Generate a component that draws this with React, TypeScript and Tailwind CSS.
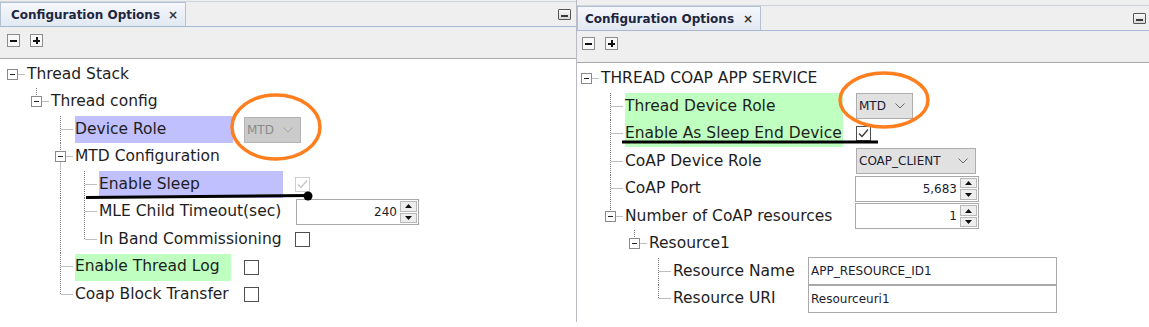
import type { ReactNode } from "react";

type Editor =
  | { type: "dropdown"; value: string; width: number; disabled?: boolean }
  | { type: "checkbox"; checked?: boolean; disabled?: boolean }
  | { type: "spinner"; value: string; width: number }
  | { type: "text"; value: string; width: number };

type Row = {
  level: number;
  label: string;
  branch?: boolean;
  last?: boolean;
  guides?: number[];
  hl?: "purple" | "green";
  hlWidth?: number;
  editorX?: number;
  editor?: Editor;
};

const leftRows: Row[] = [
  { level: 0, label: "Thread Stack", branch: true, last: true },
  { level: 1, label: "Thread config", branch: true, last: true },
  {
    level: 2,
    label: "Device Role",
    hl: "purple",
    hlWidth: 158,
    editorX: 244,
    editor: { type: "dropdown", value: "MTD", width: 57, disabled: true },
  },
  { level: 2, label: "MTD Configuration", branch: true },
  {
    level: 3,
    label: "Enable Sleep",
    guides: [2],
    hl: "purple",
    hlWidth: 184,
    editorX: 295,
    editor: { type: "checkbox", checked: true, disabled: true },
  },
  {
    level: 3,
    label: "MLE Child Timeout(sec)",
    guides: [2],
    editorX: 296,
    editor: { type: "spinner", value: "240", width: 123 },
  },
  {
    level: 3,
    label: "In Band Commissioning",
    guides: [2],
    last: true,
    editorX: 295,
    editor: { type: "checkbox" },
  },
  {
    level: 2,
    label: "Enable Thread Log",
    hl: "green",
    hlWidth: 156,
    editorX: 244,
    editor: { type: "checkbox" },
  },
  { level: 2, label: "Coap Block Transfer", last: true, editorX: 244, editor: { type: "checkbox" } },
];

const rightRows: Row[] = [
  { level: 0, label: "THREAD COAP APP SERVICE", branch: true, last: true },
  {
    level: 1,
    label: "Thread Device Role",
    hl: "green",
    hlWidth: 218,
    editorX: 279,
    editor: { type: "dropdown", value: "MTD", width: 57 },
  },
  {
    level: 1,
    label: "Enable As Sleep End Device",
    hl: "green",
    hlWidth: 218,
    editorX: 279,
    editor: { type: "checkbox", checked: true },
  },
  {
    level: 1,
    label: "CoAP Device Role",
    editorX: 279,
    editor: { type: "dropdown", value: "COAP_CLIENT", width: 120 },
  },
  { level: 1, label: "CoAP Port", editorX: 278, editor: { type: "spinner", value: "5,683", width: 124 } },
  {
    level: 1,
    label: "Number of CoAP resources",
    branch: true,
    last: true,
    editorX: 278,
    editor: { type: "spinner", value: "1", width: 124 },
  },
  { level: 2, label: "Resource1", branch: true, last: true },
  {
    level: 3,
    label: "Resource Name",
    editorX: 231,
    editor: { type: "text", value: "APP_RESOURCE_ID1", width: 249 },
  },
  {
    level: 3,
    label: "Resource URI",
    last: true,
    editorX: 231,
    editor: { type: "text", value: "Resourceuri1", width: 249 },
  },
];

const dot = { stroke: "#7c7c7c", strokeWidth: 1, strokeDasharray: "1 1" };

function Connectors({ row, base, col }: { row: Row; base: number; col: number }) {
  const w = base + 24 * row.level;
  const h = 27.5;
  const mid = 13.5;
  const x = (k: number) => Math.floor(col + 24 * k) + 0.5;
  const own = x(row.level);
  return (
    <svg width={w} height={h} className="shrink-0">
      {(row.guides ?? []).map((k) => (
        <line key={k} x1={x(k)} x2={x(k)} y1={0} y2={h} {...dot} />
      ))}
      {row.level > 0 &&
        (row.branch ? (
          <>
            <line x1={own} x2={own} y1={0} y2={mid - 5} {...dot} />
            {!row.last && <line x1={own} x2={own} y1={mid + 6} y2={h} {...dot} />}
          </>
        ) : (
          <line x1={own} x2={own} y1={0} y2={row.last ? mid : h} {...dot} />
        ))}
      {row.branch ? (
        <>
          <rect x={own - 5} y={mid - 5} width={10} height={10} fill="#fff" stroke="#8a8a8a" />
          <line x1={own - 2.5} x2={own + 2.5} y1={mid} y2={mid} stroke="#222" />
          <line x1={own + 6} x2={w - 2} y1={mid} y2={mid} {...dot} />
        </>
      ) : (
        <line x1={own + 1} x2={w - 2} y1={mid} y2={mid} {...dot} />
      )}
    </svg>
  );
}

function Chevron({ color }: { color: string }) {
  return (
    <svg width="10" height="6" viewBox="0 0 10 6">
      <polyline points="0.5,0.5 5,5 9.5,0.5" fill="none" stroke={color} strokeWidth="1" />
    </svg>
  );
}

function Check({ color }: { color: string }) {
  return (
    <svg width="13" height="13" viewBox="0 0 13 13">
      <polyline points="2,6.5 5,9.5 11,2.5" fill="none" stroke={color} strokeWidth="1.2" />
    </svg>
  );
}

function EditorView({ editor }: { editor: Editor }) {
  if (editor.type === "dropdown") {
    return (
      <div
        style={{ width: editor.width }}
        className={`flex h-[26px] items-center justify-between border pl-[2px] pr-[7px] text-[12px] ${
          editor.disabled
            ? "border-[#b3b3b3] bg-[#cbcbcb] text-[#8a8a8a]"
            : "border-[#adadad] bg-[#e1e1e1] text-[#1c1c30]"
        }`}
      >
        <span>{editor.value}</span>
        <Chevron color={editor.disabled ? "#a6a6a6" : "#6a6a6a"} />
      </div>
    );
  }
  if (editor.type === "checkbox") {
    return (
      <div
        className={`flex h-[15px] w-[15px] items-center justify-center border bg-white ${
          editor.disabled ? "border-[#cfcfcf]" : "border-[#4e4e4e]"
        }`}
      >
        {editor.checked && <Check color={editor.disabled ? "#c4c4c4" : "#333"} />}
      </div>
    );
  }
  if (editor.type === "spinner") {
    return (
      <div style={{ width: editor.width }} className="flex h-[26px] border border-[#a8a8a8] bg-white">
        <div className="flex flex-1 items-center justify-end pr-[2px] text-[12px] text-[#1c1c30]">
          {editor.value}
        </div>
        <div className="flex w-[19px] flex-col gap-px p-px">
          <div className="flex flex-1 items-center justify-center border border-[#b8b8b8] bg-[#eeeeee]">
            <svg width="7" height="4" viewBox="0 0 7 4">
              <polygon points="0,4 3.5,0 7,4" fill="#111" />
            </svg>
          </div>
          <div className="flex flex-1 items-center justify-center border border-[#b8b8b8] bg-[#eeeeee]">
            <svg width="7" height="4" viewBox="0 0 7 4">
              <polygon points="0,0 3.5,4 7,0" fill="#111" />
            </svg>
          </div>
        </div>
      </div>
    );
  }
  return (
    <div
      style={{ width: editor.width }}
      className="flex h-[28px] items-center border border-[#a9a9a9] bg-white pl-[2px] text-[12px] text-[#1c1c30]"
    >
      {editor.value}
    </div>
  );
}

function TreeRow({ row, base, col }: { row: Row; base: number; col: number }) {
  const textX = base + 24 * row.level;
  const hlClass =
    row.hl === "purple" ? "bg-[#c0c0ff]" : row.hl === "green" ? "bg-[#bfffbf]" : "";
  return (
    <div className="flex h-[27.5px] items-center">
      <Connectors row={row} base={base} col={col} />
      <div
        style={row.editorX ? { width: row.editorX - textX } : undefined}
        className="flex h-full shrink-0 items-center"
      >
        <span
          style={row.hlWidth ? { width: row.hlWidth } : undefined}
          className={`flex h-[27px] items-center whitespace-nowrap ${hlClass}`}
        >
          {row.label}
        </span>
      </div>
      {row.editor && <EditorView editor={row.editor} />}
    </div>
  );
}

function MinimizeIcon() {
  return (
    <div className="flex h-[11px] w-[13px] items-end justify-center rounded-[1px] border border-[#555] bg-linear-to-b from-[#fafafa] to-[#d8d8d8] pb-[2px]">
      <div className="h-[2px] w-[7px] bg-[#3a3a3a]" />
    </div>
  );
}

function ToolButton({ plus }: { plus?: boolean }) {
  return (
    <div className="relative flex h-[13px] w-[13px] items-center justify-center border border-[#8c8c8c] bg-[#f8f8f8]">
      <div className="h-[2px] w-[7px] bg-[#111]" />
      {plus && <div className="absolute h-[7px] w-[2px] bg-[#111]" />}
    </div>
  );
}

function Panel({
  rows,
  base,
  col,
  topStrip,
  tabPad,
  tabWidth,
  tabTop,
  toolPad,
  contentPad,
  iconMargin,
  className,
}: {
  rows: Row[];
  base: number;
  col: number;
  topStrip: string;
  tabPad: string;
  tabWidth: string;
  tabTop: string;
  toolPad: string;
  contentPad: string;
  iconMargin: string;
  className: string;
}) {
  return (
    <div className={`flex flex-col ${className}`}>
      <div className={`${topStrip} shrink-0 border-b border-[#ccd3dc] bg-[#efefef]`} />
      <div className="flex h-[25px] shrink-0 items-center border-b border-[#a7b8d0] bg-[#efefef]">
        <div
          className={`flex h-full items-center justify-between self-end border-x border-t border-[#b4c1d3] bg-linear-to-b from-[#f5f7fb] to-[#e2e9f2] ${tabPad} ${tabWidth} ${tabTop}`}
        >
          <span className="text-[12px] font-bold text-[#1d2640]">Configuration Options</span>
          <span className="text-[12px] font-bold text-[#333]">×</span>
        </div>
        <div className="flex-1" />
        <div className={iconMargin}>
          <MinimizeIcon />
        </div>
      </div>
      <div className={`flex h-[32px] shrink-0 items-start gap-[10px] border-b border-[#a9a9a9] bg-[#efefef] ${toolPad}`}>
        <ToolButton />
        <ToolButton plus />
      </div>
      <div className={`flex-1 bg-white text-[15.5px] text-[#1e1e1e] ${contentPad}`}>
        {rows.map((r) => (
          <TreeRow key={r.label} row={r} base={base} col={col} />
        ))}
      </div>
    </div>
  );
}

export default function App() {
  return (
    <div className="relative flex h-[327px] w-[1149px] items-start overflow-hidden bg-white font-['DejaVu_Sans',sans-serif]">
      <Panel
        rows={leftRows}
        base={27}
        col={12.5}
        topStrip="h-[2px]"
        tabPad="pl-[10px] pr-[7px]"
        tabWidth="w-[186px]"
        tabTop="h-[22px]"
        toolPad="pl-[7px] pt-[7px]"
        contentPad="pt-[1.75px]"
        iconMargin="mr-[5px]"
        className="h-[322px] w-[577px] shrink-0 border-r border-[#b8bbc3]"
      />
      <Panel
        rows={rightRows}
        base={24}
        col={9.5}
        topStrip="h-[6px]"
        tabPad="pl-[7px] pr-[7px]"
        tabWidth="w-[184px]"
        tabTop="h-[24px]"
        toolPad="pl-[5px] pt-[6px]"
        contentPad="pt-[2px]"
        iconMargin="mr-[3px]"
        className="h-full flex-1"
      />
      <svg className="pointer-events-none absolute inset-0" width="1149" height="327">
        <ellipse cx="276" cy="127" rx="44" ry="32" fill="none" stroke="#ff7f1f" strokeWidth="3.5" />
        <ellipse cx="884" cy="100" rx="44" ry="27" fill="none" stroke="#ff7f1f" strokeWidth="3.5" />
        <line x1="86" y1="197.5" x2="308" y2="195.5" stroke="#000" strokeWidth="3" />
        <circle cx="308" cy="196" r="4.5" fill="#000" />
        <line x1="622" y1="142" x2="878" y2="142" stroke="#000" strokeWidth="3" />
      </svg>
    </div>
  );
}
